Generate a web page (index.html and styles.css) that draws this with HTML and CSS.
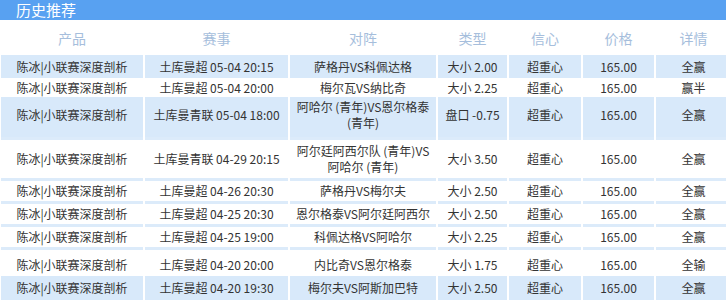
FILE: index.html
```html
<!DOCTYPE html>
<html lang="zh-CN">
<head>
<meta charset="utf-8">
<title>历史推荐</title>
<link rel="stylesheet" href="styles.css">
</head>
<body>
<div class="panel">
  <div class="title">历史推荐</div>
  <table class="hist">
    <colgroup>
      <col class="c1"><col class="c2"><col class="c3"><col class="c4"><col class="c5"><col class="c6"><col class="c7">
    </colgroup>
    <thead>
      <tr><th>产品</th><th>赛事</th><th>对阵</th><th>类型</th><th>信心</th><th>价格</th><th>详情</th></tr>
    </thead>
    <tbody>
      <tr class="hl"><td>陈冰|小联赛深度剖析</td><td>土库曼超 05-04 20:15</td><td>萨格丹VS科佩达格</td><td>大小 2.00</td><td>超重心</td><td>165.00</td><td>全赢</td></tr>
      <tr class="short"><td>陈冰|小联赛深度剖析</td><td>土库曼超 05-04 20:00</td><td>梅尔瓦VS纳比奇</td><td>大小 2.25</td><td>超重心</td><td>165.00</td><td>赢半</td></tr>
      <tr class="hl two"><td>陈冰|小联赛深度剖析</td><td>土库曼青联 05-04 18:00</td><td>阿哈尔 (青年)VS恩尔格泰<br>(青年)</td><td>盘口 -0.75</td><td>超重心</td><td>165.00</td><td>全赢</td></tr>
      <tr class="two"><td>陈冰|小联赛深度剖析</td><td>土库曼青联 04-29 20:15</td><td>阿尔廷阿西尔队 (青年)VS<br>阿哈尔 (青年)</td><td>大小 3.50</td><td>超重心</td><td>165.00</td><td>全赢</td></tr>
      <tr><td>陈冰|小联赛深度剖析</td><td>土库曼超 04-26 20:30</td><td>萨格丹VS梅尔夫</td><td>大小 2.50</td><td>超重心</td><td>165.00</td><td>全赢</td></tr>
      <tr><td>陈冰|小联赛深度剖析</td><td>土库曼超 04-25 20:30</td><td>恩尔格泰VS阿尔廷阿西尔</td><td>大小 2.50</td><td>超重心</td><td>165.00</td><td>全赢</td></tr>
      <tr><td>陈冰|小联赛深度剖析</td><td>土库曼超 04-25 19:00</td><td>科佩达格VS阿哈尔</td><td>大小 2.25</td><td>超重心</td><td>165.00</td><td>全赢</td></tr>
      <tr class="tall"><td>陈冰|小联赛深度剖析</td><td>土库曼超 04-20 20:00</td><td>内比奇VS恩尔格泰</td><td>大小 1.75</td><td>超重心</td><td>165.00</td><td>全输</td></tr>
      <tr class="hl last"><td>陈冰|小联赛深度剖析</td><td>土库曼超 04-20 19:30</td><td>梅尔夫VS阿斯加巴特</td><td>大小 2.50</td><td>超重心</td><td>165.00</td><td>全赢</td></tr>
    </tbody>
  </table>
</div>
</body>
</html>
```
FILE: styles.css
```css
html, body {
  margin: 0;
  padding: 0;
  background: #fff;
}
body {
  font-family: "Noto Sans CJK SC", "Noto Sans", sans-serif;
  color: #333;
  width: 726px;
  overflow: hidden;
}
.title {
  height: 20px;
  background: #58a1f1;
  color: #fff;
  font-size: 15px;
  line-height: 20px;
  padding-left: 16px;
}
.hist {
  width: 728px;
  margin-left: -1px;
  border-collapse: separate;
  border-spacing: 2px 0;
  table-layout: fixed;
  font-size: 12px;
}
.c1 { width: 142px; }
.c2 { width: 143px; }
.c3 { width: 146px; }
.c4 { width: 69px; }
.c5 { width: 72px; }
.c6 { width: 71px; }
.c7 { width: 75px; }
.hist th {
  height: 35px;
  font-weight: normal;
  font-size: 14px;
  color: #a6bedc;
  padding: 0;
  vertical-align: middle;
}
.hist td {
  height: 20px;
  padding: 0;
  text-align: center;
  vertical-align: middle;
  line-height: 16px;
  border-top: 3px solid #dcebfa;
  white-space: nowrap;
}
.hist tr.hl td {
  background: #d8e9fa;
  border-top-width: 0;
  height: 23px;
}
.hist tr.short td {
  height: 19px;
  border-top-width: 0;
}
.hist tr.hl.two td {
  height: 36px;
  padding-bottom: 4px;
}
.hist tr.two td {
  height: 38px;
}
.hist tr.tall td {
  height: 23px;
  padding-top: 3px;
}
.hist tr.last td {
  height: 24px;
}
```
